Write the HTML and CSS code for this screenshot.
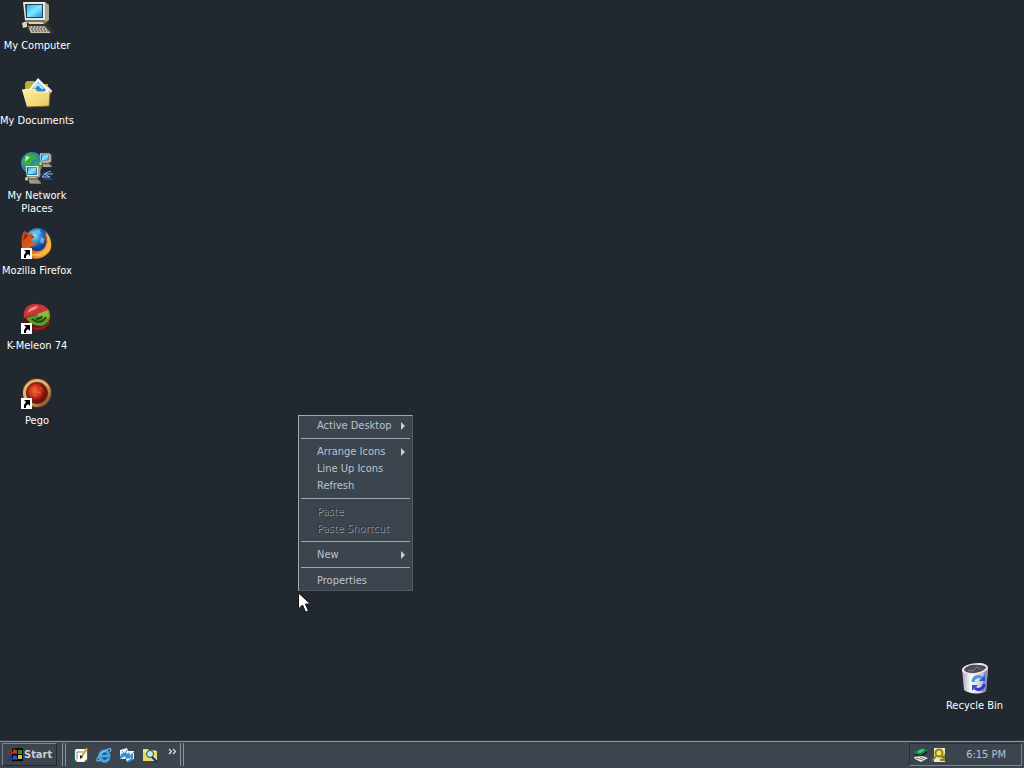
FILE: index.html
```html
<!DOCTYPE html>
<html lang="en">
<head>
<meta charset="utf-8">
<title>Desktop</title>
<link rel="stylesheet" href="styles.css">
</head>
<body>
<svg class="defs" width="0" height="0" aria-hidden="true">
  <defs>
    <linearGradient id="screen" x1="0" y1="0" x2="1" y2="1"><stop offset="0" stop-color="#38a8ee"/><stop offset=".5" stop-color="#7cecff"/><stop offset="1" stop-color="#2590e0"/></linearGradient>
    <linearGradient id="folder" x1="0" y1="0" x2="1" y2="1"><stop offset="0" stop-color="#fff3a6"/><stop offset="1" stop-color="#e9c75c"/></linearGradient>
    <radialGradient id="globe" cx=".35" cy=".3"><stop offset="0" stop-color="#9ee6ff"/><stop offset=".5" stop-color="#348bd4"/><stop offset="1" stop-color="#123c8c"/></radialGradient>
    <linearGradient id="fox" x1="0" y1="0" x2="1" y2="1"><stop offset="0" stop-color="#c84018"/><stop offset=".5" stop-color="#e0641c"/><stop offset="1" stop-color="#f8b840"/></linearGradient>
    <radialGradient id="redball" cx=".4" cy=".4"><stop offset="0" stop-color="#f06a40"/><stop offset=".6" stop-color="#c83018"/><stop offset="1" stop-color="#781008"/></radialGradient>
    <linearGradient id="ring" x1="0" y1="0" x2="1" y2="1"><stop offset="0" stop-color="#e8b070"/><stop offset=".5" stop-color="#e4b074"/><stop offset="1" stop-color="#7a4020"/></linearGradient>
    <linearGradient id="bin" x1="0" y1="0" x2="1" y2="0"><stop offset="0" stop-color="#a8a8bc"/><stop offset=".35" stop-color="#fff"/><stop offset="1" stop-color="#a4a4ba"/></linearGradient>
    <symbol id="shortcut" viewBox="0 0 11 11"><path d="M0 0h11v11H0z" fill="#fff"/><path d="M3 2h6v6L7 6 5 8v2H3V7l2-3z" fill="#000"/></symbol>
    <symbol id="pc" viewBox="0 0 32 32">
      <path d="M6 19h20l6 10v3H9l-3-4z" fill="#33332f"/>
      <path d="M1 21l5-2v6l-4 1z" fill="#ddd6bd"/>
      <path d="M3 0h21l4 3v15l-3 3H6l-2-2z" fill="#77736a"/>
      <path d="M2 0h22l1 18H4z" fill="#f0ead4"/><path d="M24 0l4 3v15l-4 2z" fill="#aaa58f"/>
      <path d="M4 2h18v14H5z" fill="#15456e"/><path d="M6 3h15v12H6z" fill="url(#screen)"/>
      <path d="M7 20h14l3 2H8z" fill="#d8d2bc"/>
      <path d="M7 24h17l5 6v1H10z" fill="#c4bfae"/>
      <path d="M8 25h17M10 27h17M11 29h18" stroke="#484844" stroke-width="1" stroke-dasharray="2 1"/>
    </symbol>
  </defs>
</svg>

<main class="desktop">
  <nav class="icons" aria-label="Desktop icons">
    <a class="icon" href="#computer">
      <svg viewBox="0 0 32 32"><use href="#pc"/></svg>
      <span>My Computer</span>
    </a>
    <a class="icon" href="#documents">
      <svg viewBox="0 0 32 32">
        <path d="M4 6l2-2h7l2 3h12v16H4z" fill="#b7ab39"/>
        <path d="M8 12l9-11 12 12-9 9z" fill="#eef7ff"/><path d="M11 12l6-7 8 8-5 5z" fill="#2f83c8"/>
        <path d="M13 11l4-4 5 5" fill="none" stroke="#b7e9fb" stroke-width="2"/>
        <path d="M26 10l4 4-3 4" fill="none" stroke="#eee" stroke-width="2"/>
        <path d="M1 13l13-1 2 3h13l-1 14-22 1z" fill="url(#folder)"/>
        <path d="M1 13l13-1 2 3h13" fill="none" stroke="#fff9c8"/><path d="M6 30l22-1 1-14" fill="none" stroke="#8a7028"/>
      </svg>
      <span>My Documents</span>
    </a>
    <a class="icon" href="#network">
      <svg viewBox="0 0 32 32">
        <circle cx="11" cy="11" r="11" fill="#2686bc"/>
        <path d="M8 1l6 2 3 4-5 1-2 4-4 2-5-2 2-7zM14 10l7 1-1 7-6 2-3-4z" fill="#39ad3b"/>
        <path d="M5 4l4 1-5 5z" fill="#c0f2cb"/>
        <use href="#pc" x="18" y="1" width="14" height="15"/>
        <use href="#pc" x="3" y="14" width="19" height="18"/>
        <path d="M21 25h8l-6-3h9M21 25l4-4 5-2" stroke="#8bbef4" fill="none"/>
        <path d="M22 27h10M20 23l5-3" stroke="#1a54b4"/>
      </svg>
      <span>My Network Places</span>
    </a>
    <a class="icon" href="#firefox">
      <svg viewBox="0 0 32 32">
        <circle cx="17" cy="14" r="13" fill="url(#globe)"/>
        <path d="M12 5l6-3 2 4-5 2zM20 10l4 2-2 5-3-2z" fill="#71bee4" opacity=".8"/>
        <path d="M3 4c2 0 3 1 4 3 3-1 5 0 6 3l-2 2-1 3 5 1c-1 4-4 3-6 4 2 5 10 6 14 1 3-4 3-10 0-15 9 6 10 17 2 22-8 7-23 4-24-8C0 12 1 7 3 4z" fill="url(#fox)"/>
        <path d="M24 4c7 6 8 16 2 22-6 5-13 4-17 1 17 1 21-11 15-23z" fill="#f8b83c"/>
        <path d="M4 6l3 3-5 5zM10 9l4 1-3 1z" fill="#8d2914"/>
        <use href="#shortcut" x="0" y="21" width="11" height="11"/>
      </svg>
      <span>Mozilla Firefox</span>
    </a>
    <a class="icon" href="#kmeleon">
      <svg viewBox="0 0 32 32">
        <circle cx="16" cy="16" r="14" fill="#601212"/>
        <path d="M3 16C1 6 9 1 16 2c5 0 9 2 12 6L14 13z" fill="#c83437"/>
        <path d="M6 11c2-5 6-7 11-7l-2 3z" fill="#f08884"/>
        <path d="M5 16l10-3 13-5c3 8 0 13-7 16-8 0-13-3-16-8z" fill="#5c9a2a"/>
        <path d="M16 12l11-4 1 7-6 3z" fill="#8cba40"/>
        <path d="M11 17c5 4 10 4 14-2M15 17l5-1 1-2" fill="none" stroke="#1c4410" stroke-width="2"/>
        <path d="M12 26c8 2 13-1 16-6" fill="none" stroke="#8a2820" stroke-width="2"/>
        <use href="#shortcut" x="0" y="21" width="11" height="11"/>
      </svg>
      <span>K-Meleon 74</span>
    </a>
    <a class="icon" href="#pego">
      <svg viewBox="0 0 32 32">
        <circle cx="16" cy="16" r="15" fill="#5b2d16"/><circle cx="16" cy="16" r="12.5" fill="none" stroke="url(#ring)" stroke-width="3"/>
        <circle cx="16" cy="16" r="10" fill="url(#redball)"/>
        <path d="M12 11l3-2m2 6l3 1m-7 2l2 1m4-8l2 1" stroke="#f4835c" opacity=".6"/>
        <use href="#shortcut" x="0" y="21" width="11" height="11"/>
      </svg>
      <span>Pego</span>
    </a>
  </nav>

  <a class="icon recycle" href="#recycle">
    <svg viewBox="0 0 32 32">
      <path d="M3 7l2 21c5 4 16 5 22 1l2-23z" fill="url(#bin)"/>
      <path d="M25 9l4-3-2 23-4 2z" fill="#8f8fae"/>
      <path d="M3 8c0-4 8-7 17-7 5 0 9 2 9 5-1 4-9 6-17 6-5 0-9-1-9-4z" fill="#e8e8f0"/>
      <path d="M5 8c1-4 8-6 14-5 5 0 8 1 8 3-2 3-9 5-14 5-4 0-7-1-8-3z" fill="#504c51"/>
      <path d="M9 8l5 1 4-4 4 2" stroke="#858286" fill="none"/>
      <path d="M14 20c0-5 6-7 9-4" fill="none" stroke="#4a9ae8" stroke-width="3"/>
      <path d="M20 19h6v-6z" fill="#2858d4"/>
      <path d="M25 22c0 5-6 7-9 4" fill="none" stroke="#3038c8" stroke-width="3"/>
      <path d="M19 23h-6v6z" fill="#2858d4"/>
    </svg>
    <span>Recycle Bin</span>
  </a>

  <div class="menu" role="menu" aria-label="Desktop menu">
    <button class="more" role="menuitem">Active Desktop</button>
    <hr>
    <button class="more" role="menuitem">Arrange Icons</button>
    <button role="menuitem">Line Up Icons</button>
    <button role="menuitem">Refresh</button>
    <hr>
    <button role="menuitem" disabled>Paste</button>
    <button role="menuitem" disabled>Paste Shortcut</button>
    <hr>
    <button class="more" role="menuitem">New</button>
    <hr>
    <button role="menuitem">Properties</button>
  </div>
  <svg class="pointer" viewBox="0 0 12 21" aria-hidden="true"><path d="M.5 1v16l4-4 3 7 3-1-3-7h5z" fill="#fff" stroke="#111"/></svg>
</main>

<footer class="taskbar">
  <button class="start">
    <svg viewBox="0 0 16 16" aria-hidden="true">
      <path d="M5 2c4-2 5 0 11-1v13c-5 1-7-1-11 1z" fill="#080808"/>
      <path d="M6 3c2-1 3 0 4 0v4c-1 0-3-1-4 0z" fill="#d73420"/><path d="M11 3h4v4h-4z" fill="#209830"/>
      <path d="M6 9c1-1 3 0 4 0v4c-1 0-3-1-4 0z" fill="#2b50d0"/><path d="M11 8h4v4h-4z" fill="#d8c42a"/>
      <path d="M0 5h2m1-1h2M1 7h2m1-1h2" stroke="#a82428" stroke-width="2"/>
      <path d="M0 11h2m1-1h2M1 13h2m1-1h2" stroke="#2230a0" stroke-width="2"/>
    </svg>Start
  </button>
  <i class="grip"></i>
  <div class="quick">
    <button aria-label="Show Desktop"><svg viewBox="0 0 16 16">
      <path d="M1 2h14v13H1z" fill="#286d63"/><path d="M3 2h11v10l-3 3H4l-2-3V4z" fill="#fff9df"/><path d="M4 5l3-2h4v3l2 2-2 5H5l-2-3z" fill="#fff"/><path d="M4 12V5h7" fill="none" stroke="#8d867a"/><path d="M7 10l6-9 2 1-6 9z" fill="#e0a82f"/><path d="M7 8v4l3-2" fill="#222"/>
    </svg></button>
    <button aria-label="Internet Explorer"><svg viewBox="0 0 16 16">
      <path d="M13 11c-2 5-10 4-9-3 1-6 9-5 9 1H5" fill="none" stroke="#39a8ee" stroke-width="3"/>
      <path d="M4 13c-6 4-3-4 3-8s10-5 7 0" fill="none" stroke="#8ad9ff" stroke-width="1"/>
    </svg></button>
    <button aria-label="Outlook Express"><svg viewBox="0 0 16 16">
      <path d="M1 3l7-2 1 3h6v8l-7 3-1-3H1z" fill="#e8f5ff"/><path d="M3 4l3 3 2-4M8 7l3 2 4-4" fill="none" stroke="#4f91c9"/><path d="M1 10c1-5 5-5 8-3l1-2 2 6-6 1 1-2c-2-1-4 0-6 3z" fill="#348ed4"/><path d="M13 7v5l-5 3" fill="none" stroke="#388fda" stroke-width="2"/>
    </svg></button>
    <button aria-label="Search"><svg viewBox="0 0 16 16">
      <path d="M1 2h5l1 2h8v10H1z" fill="#e8d867"/><path d="M1 4h13" stroke="#fff8ab"/><circle cx="8" cy="7" r="3.5" fill="#bce9ff" stroke="#26465a"/><path d="M10 10l5 5" stroke="#102d78" stroke-width="2"/>
    </svg></button>
    <button class="chevron" aria-label="More"><svg viewBox="0 0 9 7"><path d="M1 1l2.500 2.500L1 6M5 1l2.500 2.500L5 6" fill="none" stroke="#d7dde4" stroke-width="1.300"/></svg></button>
  </div>
  <i class="grip"></i>
  <div class="tray">
    <svg viewBox="0 0 16 16" role="img" aria-label="Safely remove hardware">
      <path d="M1 5l8-4 6 2-7 5-6-1z" fill="#188447"/><path d="M4 5l5-3 3 1-5 3z" fill="#52c483"/><path d="M1 10l8-1 6 2-7 4-6-3z" fill="#eee"/><path d="M3 11l7 2M7 10l5 2" stroke="#777"/><path d="M1 7l7 1 6-4v2L9 9 1 8z" fill="#101b15"/>
    </svg>
    <svg viewBox="0 0 16 16" role="img" aria-label="Indexing">
      <path d="M3 1h11v14H3z" fill="#eee9bd"/><circle cx="8" cy="6" r="3.5" fill="#f3e64c" stroke="#8b821e" stroke-width="2"/><path d="M5 9l-4 5M10 11l3-2v4h-4" stroke="#867e20" stroke-width="2" fill="none"/>
    </svg>
    <time datetime="18:15">6:15 PM</time>
  </div>
</footer>
</body>
</html>
```

FILE: styles.css
```css
* { box-sizing: border-box; }

body {
  margin: 0;
  min-height: 100vh;
  display: flex;
  flex-direction: column;
  overflow-x: hidden;
  background: #212830;
  font: 11px/13px "DejaVu Sans Condensed", "DejaVu Sans", sans-serif;
  font-stretch: condensed;
  color: #fff;
}

.defs { position: absolute; }

button {
  border: 0;
  padding: 0;
  background: none;
  color: inherit;
  font: inherit;
}

.desktop {
  position: relative;
  flex: 1;
}

.icons {
  display: grid;
  grid-auto-rows: 75px;
  width: 82px;
  margin-left: -4px;
  padding-top: 2px;
}

.icon {
  display: flex;
  flex-direction: column;
  align-items: center;
  gap: 5px;
  color: #fff;
  text-align: center;
  text-decoration: none;
}

.icon svg {
  width: 32px;
  height: 32px;
  flex: none;
}

.recycle {
  position: absolute;
  right: 12px;
  bottom: 29px;
  width: 75px;
}

.menu {
  position: absolute;
  left: 298px;
  top: 415px;
  width: 115px;
  display: flex;
  flex-direction: column;
  padding: 1px 2px;
  border: 1px solid;
  border-color: #a0a8b2 #505862 #505862 #a0a8b2;
  background: #3c444e;
  color: #bac3cf;
}

.menu button {
  display: flex;
  align-items: center;
  justify-content: space-between;
  height: 17px;
  padding: 0 5px 0 16px;
  white-space: nowrap;
}

.menu button:disabled {
  color: #2c343d;
  text-shadow: 1px 1px #8c95a0;
}

.menu hr {
  width: 100%;
  height: 1px;
  margin: 4px 0;
  border: 0;
  background: #a0a8b2;
}

.more::after {
  content: "";
  border: solid transparent;
  border-width: 4px 0 4px 4px;
  border-left-color: #c5cdd7;
}

.pointer {
  position: absolute;
  left: 298px;
  top: 592px;
  width: 12px;
  height: 21px;
}

.taskbar {
  display: flex;
  align-items: stretch;
  height: 27px;
  padding: 1px 2px 2px;
  border-top: 1px solid #8c949e;
  background: #3c444e;
  box-shadow: 0 -1px #303740;
}

.start {
  display: flex;
  align-items: center;
  gap: 1px;
  width: 55px;
  padding-left: 4px;
  border: 1px solid;
  border-color: #7c848e #22282f #22282f #7c848e;
  color: #c6ced8;
  font-weight: bold;
}

.start svg, .quick svg, .tray svg {
  width: 16px;
  height: 16px;
  flex: none;
}

.grip {
  width: 4px;
  margin-left: 5px;
  border-left: 1px solid #8c949e;
  border-right: 1px solid #8c949e;
}

.quick {
  display: flex;
  align-items: center;
  gap: 7px;
  padding-left: 7px;
}

.quick button { display: flex; }

.quick .chevron {
  align-self: flex-start;
  padding: 5px 0 0 3px;
}

.quick .chevron svg {
  width: 9px;
  height: 7px;
}

.quick + .grip { margin-left: 3px; }

.tray {
  display: flex;
  align-items: center;
  gap: 2px;
  margin-left: auto;
  padding: 0 15px 0 3px;
  border: 1px solid;
  border-color: #272e36 #7c848e #7c848e #272e36;
  color: #bac3cf;
}

.tray time { padding-left: 17px; }
```
